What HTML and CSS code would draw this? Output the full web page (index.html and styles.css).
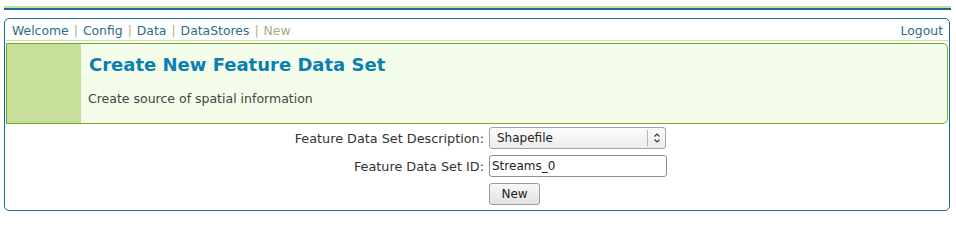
FILE: index.html
```html
<!DOCTYPE html>
<html>
<head>
<meta charset="utf-8">
<title>Create New Feature Data Set</title>
<link rel="stylesheet" href="styles.css">
</head>
<body>
<div class="page">
  <div class="topbar"></div>
  <div class="box">
    <div class="nav">
      <div class="crumbs">
        <a class="link" href="#">Welcome</a><span class="sep">|</span><a class="link" href="#">Config</a><span class="sep">|</span><a class="link" href="#">Data</a><span class="sep">|</span><a class="link" href="#">DataStores</a><span class="sep">|</span><span class="current">New</span>
      </div>
      <a class="link" href="#">Logout</a>
    </div>
    <div class="header">
      <div class="header-side"></div>
      <div class="header-body">
        <h1 class="title">Create New Feature Data Set</h1>
        <p class="subtitle">Create source of spatial information</p>
      </div>
    </div>
    <form class="form">
      <label class="label">Feature Data Set Description:</label>
      <div class="select-wrap">
        <select class="select"><option>Shapefile</option></select>
        <span class="select-btn">
          <svg width="8" height="12" viewBox="0 0 8 12"><path d="M1.5 4.5 L4 2 L6.5 4.5 M1.5 7.5 L4 10 L6.5 7.5" fill="none" stroke="#333" stroke-width="1.1"/></svg>
        </span>
      </div>
      <label class="label">Feature Data Set ID:</label>
      <div><input class="input" type="text" value="Streams_0"></div>
      <span></span>
      <div><button class="button" type="button">New</button></div>
    </form>
  </div>
</div>
</body>
</html>
```

FILE: styles.css
```css
body {
  margin: 0;
  font-family: "DejaVu Sans", Verdana, sans-serif;
  font-size: 12px;
  background: #ffffff;
}
.page {
  width: 946px;
  margin-left: 4px;
  padding-top: 6px;
}
.topbar {
  height: 2px;
  border-top: 2px solid #c8df9d;
  background: #1a6e96;
  margin-right: -1px;
}
.box {
  margin-top: 8px;
  border: 1px solid #1a6e96;
  border-radius: 5px;
  padding-bottom: 5px;
}
.nav {
  display: flex;
  justify-content: space-between;
  align-items: baseline;
  margin: 0 1px;
  padding: 4px 5px 2px 6px;
  line-height: 15px;
  font-size: 12.4px;
  border-bottom: 1px solid #c8df9d;
}
.link {
  color: #2b6e85;
  text-decoration: none;
}
.sep {
  color: #a8b66e;
  margin: 0 5px;
}
.current {
  color: #a2ad82;
}
.header {
  display: flex;
  margin: 2px 1px 0 1px;
  height: 79px;
  border: 1px solid #6fab2e;
  border-radius: 0 5px 5px 0;
  background: #f4fde9;
}
.header-side {
  width: 74px;
  background: #c8df9c;
}
.header-body {
  padding-left: 7px;
}
.title {
  margin: 10px 0 0 1px;
  font-size: 18px;
  line-height: 22px;
  font-weight: bold;
  color: #0a7fb2;
}
.subtitle {
  margin: 15px 0 0 0;
  font-size: 12.5px;
  line-height: 15px;
  color: #444444;
}
.form {
  display: grid;
  grid-template-columns: 479px auto;
  column-gap: 5px;
  row-gap: 6px;
  align-items: center;
  margin-top: 3px;
}
.label {
  text-align: right;
  color: #333333;
  font-size: 12.8px;
}
.select-wrap {
  position: relative;
  width: 177px;
  height: 22px;
}
.select {
  appearance: none;
  -webkit-appearance: none;
  box-sizing: border-box;
  width: 177px;
  height: 22px;
  margin: 0;
  padding: 0 0 0 7px;
  border: 1px solid #a3a3a3;
  border-radius: 3px;
  background: linear-gradient(#fcfcfc, #ececec);
  font-family: "DejaVu Sans", sans-serif;
  font-size: 12px;
  color: #222222;
}
.select-btn {
  position: absolute;
  top: 3px;
  right: 1px;
  width: 17px;
  height: 16px;
  border-left: 1px solid #b4b4b4;
  display: flex;
  align-items: center;
  justify-content: center;
}
.input {
  box-sizing: border-box;
  width: 178px;
  height: 22px;
  margin: 0;
  padding: 0 0 0 2px;
  border: 1px solid #8f8f8f;
  border-radius: 3px;
  background: #ffffff;
  font-family: "DejaVu Sans", sans-serif;
  font-size: 12px;
  color: #222222;
}
.button {
  box-sizing: border-box;
  width: 51px;
  height: 22px;
  margin: 0;
  padding: 0;
  border: 1px solid #9c9c9c;
  border-radius: 3px;
  background: linear-gradient(#f7f7f7, #e2e2e2);
  font-family: "DejaVu Sans", sans-serif;
  font-size: 12px;
  color: #222222;
}
```
